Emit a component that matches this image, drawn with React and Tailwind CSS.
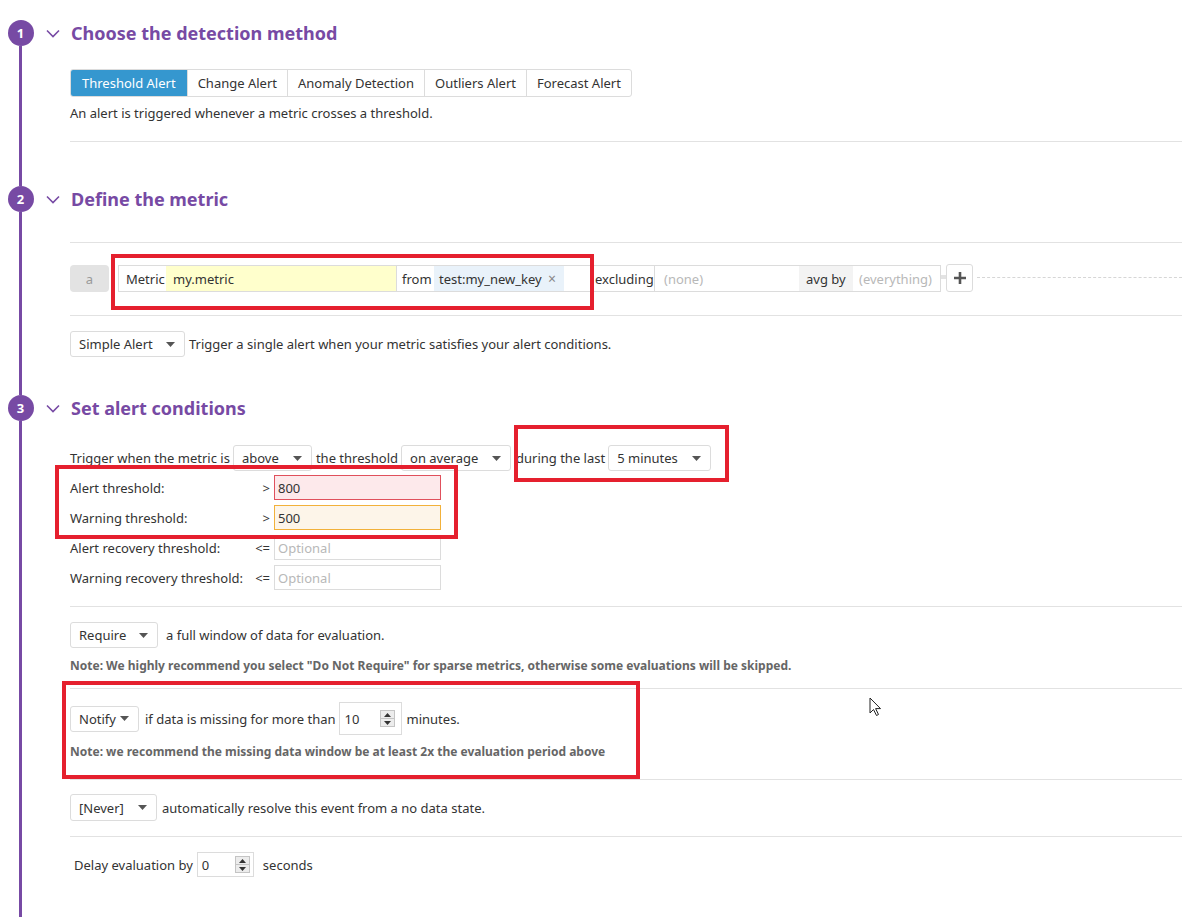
import React from 'react';

const PURPLE = '#774aa4';

function Chevron() {
  return (
    <svg width="14" height="9" viewBox="0 0 14 9" className="ml-[5px] shrink-0">
      <path d="M1 1.5 L7 7.5 L13 1.5" fill="none" stroke={PURPLE} strokeWidth="1.6" />
    </svg>
  );
}

function Caret() {
  return (
    <svg width="9" height="5" viewBox="0 0 9 5" className="shrink-0">
      <path d="M0 0 L9 0 L4.5 5 Z" fill="#555" />
    </svg>
  );
}

function Select({ label, w }) {
  return (
    <div className={`flex h-[26px] shrink-0 items-center justify-between rounded-[3px] border border-[#dcdcdc] bg-white pl-[8px] pr-[9px] ${w}`}>
      <span>{label}</span>
      <Caret />
    </div>
  );
}

function Spinner() {
  return (
    <div className="flex h-[17px] w-[15px] shrink-0 flex-col border border-[#c4c4c4] bg-[#ececec]">
      <div className="flex flex-1 items-center justify-center border-b border-[#c4c4c4]">
        <svg width="7" height="4" viewBox="0 0 7 4"><path d="M0 4 L3.5 0 L7 4 Z" fill="#333" /></svg>
      </div>
      <div className="flex flex-1 items-center justify-center">
        <svg width="7" height="4" viewBox="0 0 7 4"><path d="M0 0 L7 0 L3.5 4 Z" fill="#333" /></svg>
      </div>
    </div>
  );
}

function Section({ n, title, children }) {
  return (
    <div className="flex">
      <div className="flex w-[41px] shrink-0 flex-col items-center">
        <div className="flex h-[26px] w-[26px] items-center justify-center rounded-full bg-[#774aa4] text-[13px] font-bold text-white">
          {n}
        </div>
        <div className="w-[3px] flex-1 bg-[#774aa4]" />
      </div>
      <div className="min-w-0 flex-1">
        <div className="flex h-[26px] items-center">
          <Chevron />
          <h2 className="ml-[11px] text-[18px] font-bold text-[#774aa4]">{title}</h2>
        </div>
        <div className="pl-[29px]">{children}</div>
      </div>
    </div>
  );
}

function ThresholdRow({ label, op, value, placeholder, tone }) {
  const box =
    tone === 'alert'
      ? 'border-[#e0505c] bg-[#fde9eb]'
      : tone === 'warn'
      ? 'border-[#f2b13a] bg-[#fdf5e9]'
      : 'border-[#dcdcdc] bg-white';
  return (
    <div className="flex h-[25px] items-center">
      <span className="w-[180px]">{label}</span>
      <span className="w-[20px] text-right">{op}</span>
      <div className={`ml-[4px] flex h-[25px] w-[167px] items-center border px-[3px] ${box}`}>
        {value ? <span>{value}</span> : <span className="text-[#b8b8b8]">{placeholder}</span>}
      </div>
    </div>
  );
}

const tabs = ['Threshold Alert', 'Change Alert', 'Anomaly Detection', 'Outliers Alert', 'Forecast Alert'];

export default function App() {
  return (
    <div className="relative min-h-screen overflow-hidden bg-white pt-[20px] font-['Noto_Sans',sans-serif] text-[13px] leading-[18px] text-[#333]">
      <Section n="1" title="Choose the detection method">
        <div className="mt-[23px] flex h-[28px] w-fit rounded-[3px] border border-[#dcdcdc]">
          {tabs.map((t, i) => (
            <div
              key={t}
              className={
                i === 0
                  ? 'flex items-center rounded-l-[2px] bg-[#3597cf] px-[11px] text-white'
                  : 'flex items-center border-l border-[#dcdcdc] px-[10px]'
              }
            >
              {t}
            </div>
          ))}
        </div>
        <p className="mt-[7px]">An alert is triggered whenever a metric crosses a threshold.</p>
        <div className="mt-[19px] border-b border-[#e2e2e2]" />
        <div className="h-[44px]" />
      </Section>

      <Section n="2" title="Define the metric">
        <div className="mt-[30px] border-t border-[#e2e2e2]" />
        <div className="mt-[22px] flex items-start">
          <div className="flex h-[27px] w-[39px] items-center justify-center rounded-[4px] bg-[#e3e3e3] text-[#9a9a9a]">a</div>
          <div className="ml-[9px] flex h-[27px] w-[823px] border border-[#dcdcdc]">
            <span className="flex w-[47px] items-center pl-[7px]">Metric</span>
            <div className="flex w-[230px] items-center bg-[#ffffcc] pl-[7px]">my.metric</div>
            <span className="flex w-[38px] items-center border-l border-[#dcdcdc] pl-[5px]">from</span>
            <div className="flex w-[130px] items-center justify-between bg-[#e9f2fa] pl-[5px] pr-[8px]">
              <span>test:my_new_key</span>
              <span className="text-[14px] text-[#888]">×</span>
            </div>
            <div className="w-[31px]" />
            <span className="flex w-[60px] items-center border-r border-[#dcdcdc]">excluding</span>
            <div className="flex w-[144px] items-center pl-[9px] text-[#b8b8b8]">(none)</div>
            <span className="flex w-[54px] items-center bg-[#f3f3f3] pl-[7px]">avg by</span>
            <div className="flex flex-1 items-center pl-[6px] text-[#b8b8b8]">(everything)</div>
          </div>
          <div className="mt-[10px] h-[4px] w-[5px] bg-[#e3e3e3]" />
          <div className="-mt-[1px] flex h-[28px] w-[27px] items-center justify-center rounded-[3px] border border-[#dcdcdc]">
            <svg width="12" height="12" viewBox="0 0 12 12">
              <path d="M6 0 V12 M0 6 H12" stroke="#555" strokeWidth="2.6" />
            </svg>
          </div>
          <div className="mt-[12px] ml-[4px] flex-1 border-t border-dashed border-[#d6d6d6]" />
        </div>
        <div className="mt-[23px] border-t border-[#e2e2e2]" />
        <div className="mt-[15px] flex items-center">
          <Select label="Simple Alert" w="w-[115px]" />
          <span className="ml-[4px]">Trigger a single alert when your metric satisfies your alert conditions.</span>
        </div>
        <div className="h-[38px]" />
      </Section>

      <Section n="3" title="Set alert conditions">
        <div className="mt-[24px] flex items-center">
          <span>Trigger when the metric is</span>
          <div className="ml-[3px]"><Select label="above" w="w-[79px]" /></div>
          <span className="ml-[4px]">the threshold</span>
          <div className="ml-[3px]"><Select label="on average" w="w-[110px]" /></div>
          <span className="ml-[5px]">during the last</span>
          <div className="ml-[3px]"><Select label="5 minutes" w="w-[103px]" /></div>
        </div>
        <div className="mt-[4px] flex flex-col gap-[5px]">
          <ThresholdRow label="Alert threshold:" op=">" value="800" tone="alert" />
          <ThresholdRow label="Warning threshold:" op=">" value="500" tone="warn" />
          <ThresholdRow label="Alert recovery threshold:" op="<=" placeholder="Optional" />
          <ThresholdRow label="Warning recovery threshold:" op="<=" placeholder="Optional" />
        </div>
        <div className="mt-[16px] border-t border-[#e2e2e2]" />
        <div className="mt-[15px] flex items-center">
          <Select label="Require" w="w-[88px]" />
          <span className="ml-[8px]">a full window of data for evaluation.</span>
        </div>
        <p className="mt-[10px] text-[12px] leading-[16px] font-bold text-[#666]">
          Note: We highly recommend you select "Do Not Require" for sparse metrics, otherwise some evaluations will be skipped.
        </p>
        <div className="mt-[14px] border-t border-[#e2e2e2]" />
        <div className="mt-[13px] flex h-[33px] items-center">
          <Select label="Notify" w="w-[69px]" />
          <span className="ml-[6px]">if data is missing for more than</span>
          <div className="ml-[3px] flex h-[33px] w-[63px] items-center justify-between border border-[#dcdcdc] pl-[5px] pr-[6px]">
            <span>10</span>
            <Spinner />
          </div>
          <span className="ml-[5px]">minutes.</span>
        </div>
        <p className="mt-[9px] text-[12px] leading-[16px] font-bold text-[#666]">
          Note: we recommend the missing data window be at least 2x the evaluation period above
        </p>
        <div className="mt-[19px] border-t border-[#e2e2e2]" />
        <div className="mt-[14px] flex items-center">
          <div className="h-[27px]">
            <div className="flex h-[27px] w-[87px] items-center justify-between rounded-[3px] border border-[#dcdcdc] pl-[8px] pr-[9px]">
              <span>[Never]</span>
              <Caret />
            </div>
          </div>
          <span className="ml-[5px]">automatically resolve this event from a no data state.</span>
        </div>
        <div className="mt-[15px] border-t border-[#e2e2e2]" />
        <div className="mt-[15px] flex h-[25px] items-center pl-[4px]">
          <span>Delay evaluation by</span>
          <div className="ml-[4px] flex h-[25px] w-[57px] items-center justify-between border border-[#dcdcdc] pl-[4px] pr-[3px]">
            <span>0</span>
            <Spinner />
          </div>
          <span className="ml-[9px]">seconds</span>
        </div>
        <div className="h-[80px]" />
      </Section>

      {/* annotation boxes */}
      <div className="pointer-events-none absolute left-[111px] top-[254px] h-[56px] w-[483px] border-[4px] border-[#e5202e]" />
      <div className="pointer-events-none absolute left-[514px] top-[425px] h-[57px] w-[215px] border-[4px] border-[#e5202e]" />
      <div className="pointer-events-none absolute left-[55px] top-[465px] h-[74px] w-[403px] border-[4px] border-[#e5202e]" />
      <div className="pointer-events-none absolute left-[62px] top-[681px] h-[98px] w-[578px] border-[4px] border-[#e5202e]" />

      {/* mouse cursor */}
      <svg className="absolute left-[869px] top-[697px]" width="13" height="20" viewBox="0 0 13 20">
        <path d="M1 1 L1 16 L4.5 12.5 L7.5 18.5 L9.5 17.5 L6.6 11.6 L11.5 11.6 Z" fill="#fff" stroke="#222" strokeWidth="1" strokeLinejoin="round" />
      </svg>
    </div>
  );
}
